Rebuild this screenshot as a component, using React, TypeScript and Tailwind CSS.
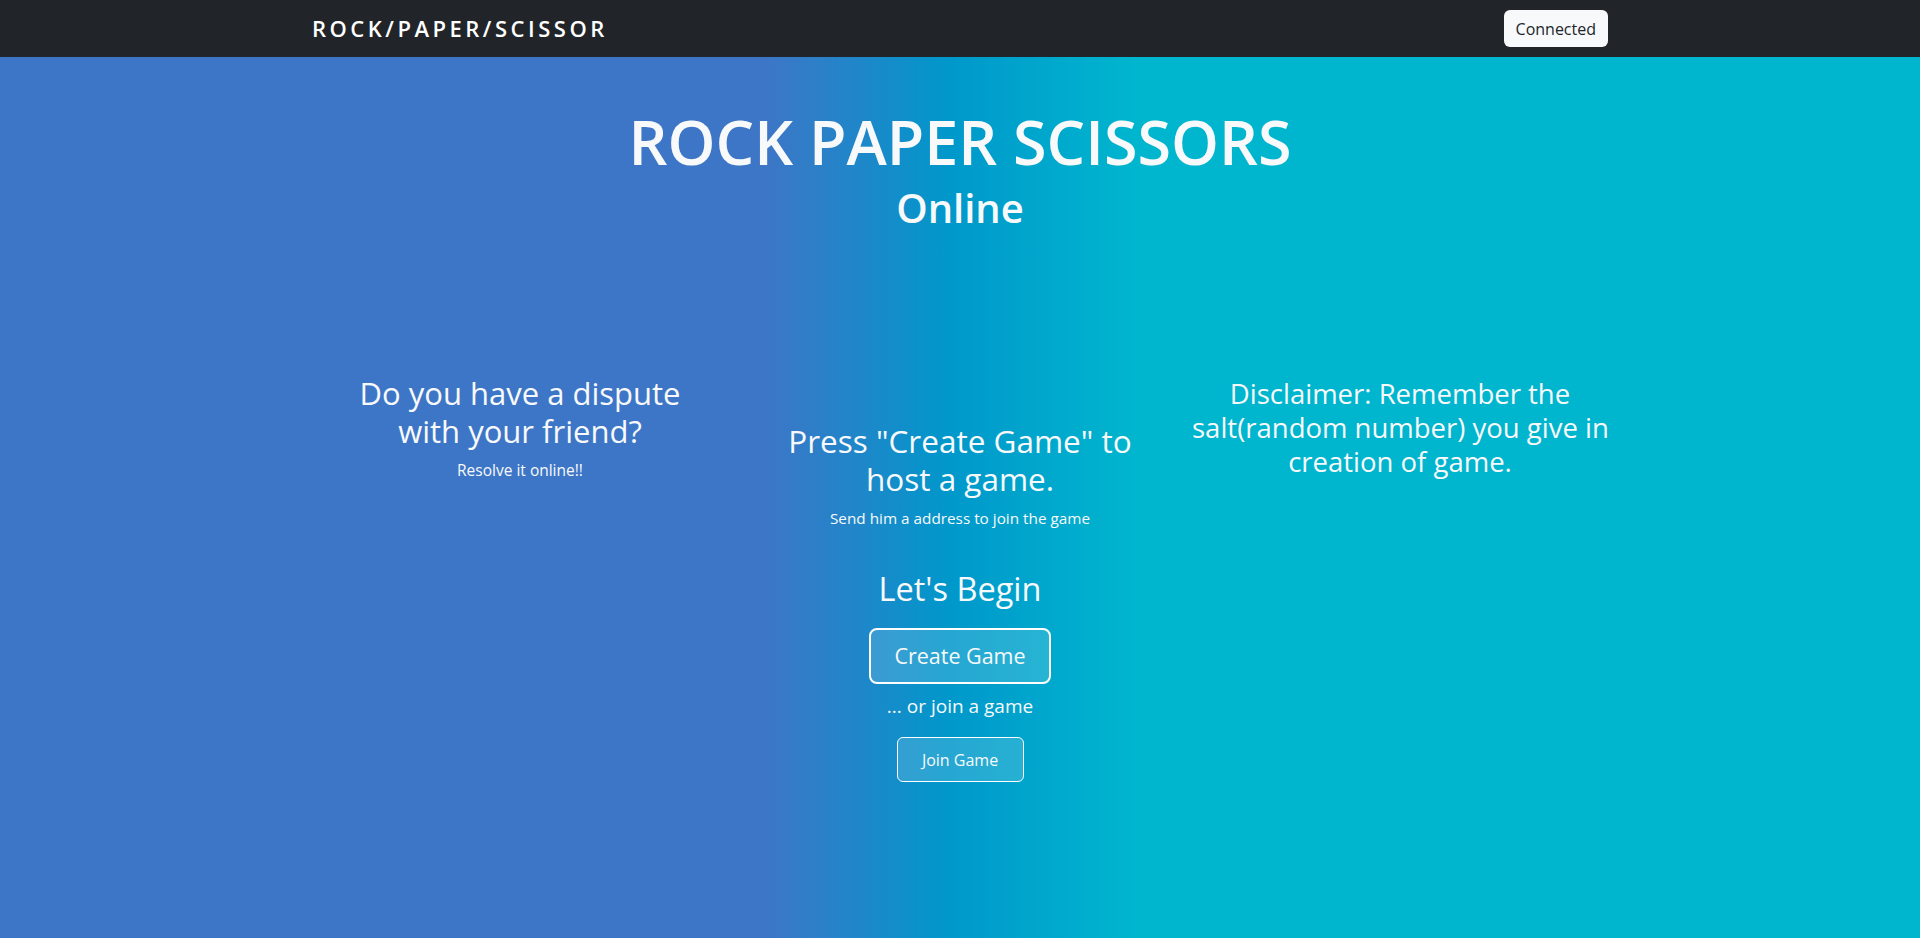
const font = { fontFamily: '"Open Sans", "Noto Sans", sans-serif' };

const Navbar = () => {
  return (
    <nav className="h-[57px] bg-[#212529] flex items-center">
      <div className="w-[1320px] mx-auto px-3 flex items-center justify-between">
        <a href="#" className="text-[22px] font-semibold tracking-[3.5px] text-white">
          ROCK/PAPER/SCISSOR
        </a>
        <button className="h-[37px] px-[12px] rounded-md bg-[#f8f9fa] text-[16px] text-[#212529]">
          Connected
        </button>
      </div>
    </nav>
  );
};

const App = () => {
  return (
    <div className="min-h-screen flex flex-col" style={font}>
      <Navbar />
      <main className="flex-1 text-[#f8f9fa] bg-[linear-gradient(to_right,#3d76c7_40%,#0098cb_49.5%,#00b5ce_59%)]">
        {/* Header */}
        <div className="text-center pt-[46px]">
          <h1 className="text-[61px] leading-[77px] font-semibold">ROCK PAPER SCISSORS</h1>
          <h2 className="text-[40px] leading-[48px] font-semibold mt-[4px]">Online</h2>
        </div>

        <div className="w-[1320px] mx-auto px-3 mt-[142px] grid grid-cols-3 gap-6 text-center">
          <div>
            <h2 className="text-[31px] leading-[38px]">
              Do you have a dispute
              <br />
              with your friend?
            </h2>
            <p className="mt-2 text-[15.5px] leading-6">Resolve it online!!</p>
          </div>

          <div className="pt-[48px] flex flex-col items-center">
            <h2 className="text-[31.5px] leading-[38px]">
              Press "Create Game" to
              <br />
              host a game.
            </h2>
            <p className="mt-2 text-[15.3px] leading-6">Send him a address to join the game</p>

            <h3 className="mt-[40px] text-[32.5px] leading-[38px]">Let's Begin</h3>
            <button className="mt-[20px] w-[182px] h-[56px] rounded-lg border-2 border-white bg-white/15 text-[21.5px]">
              Create Game
            </button>
            <p className="mt-[7px] text-[19px] leading-[30px]">... or join a game</p>
            <button className="mt-[16px] w-[127px] h-[45px] rounded-md border border-white bg-white/15 text-[16px]">
              Join Game
            </button>
          </div>

          <div className="pt-[3px]">
            <h3 className="text-[27.5px] leading-[34px] whitespace-nowrap">
              Disclaimer: Remember the
              <br />
              salt(random number) you give in
              <br />
              creation of game.
            </h3>
          </div>
        </div>
      </main>
    </div>
  );
};

export default App;
